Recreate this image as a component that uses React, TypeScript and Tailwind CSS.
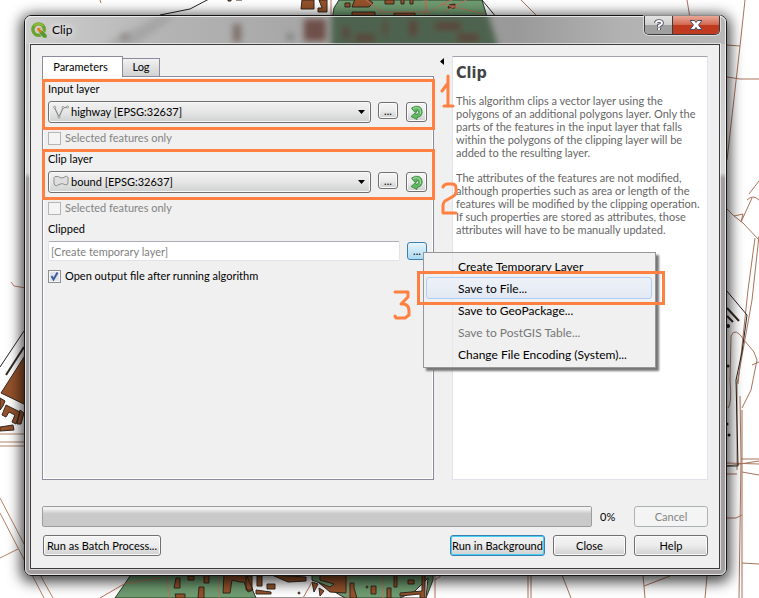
import type { ReactNode } from "react";

const DIALOG_FONT = "font-['Lato','Noto_Sans',sans-serif]";

const BUTTON =
  "rounded-[3px] border border-[#707070] bg-linear-to-b from-[#f4f4f4] from-0% via-[#ececec] via-50% to-[#cfcfcf] shadow-[inset_0_0_0_1px_#fbfbfb] text-black";

function MapBackdrop() {
  return (
    <svg
      className="absolute inset-0 h-full w-full"
      viewBox="0 0 759 598"
      preserveAspectRatio="none"
      fill="none"
      aria-hidden="true"
    >
      <rect width="759" height="598" fill="#fff" />
      {/* park at the top */}
      <path d="M339 0L334 8L332 20H488L482 0Z" fill="#6f9c71" stroke="#2b3d2b" />
      <path d="M482 0L497 18M209 -1L190 9L160 15" stroke="#222" />
      <g fill="#95522b" stroke="#35281f" strokeWidth="1">
        <path d="M302 0H314V9H301ZM319 0H327V12H318V8H322ZM345 3H350V7H345ZM355 -1H368L373 3L369 7H352ZM352 12H375V16H352ZM385 0H394V4H385ZM401 -1H404V4H401ZM410 -1H413V4H410ZM394 13H415V17H394ZM449 5L455 4V8H448Z" />
        <path d="M228 -1H231V1H228ZM236 -1H242V0H236Z" />
      </g>
      <path
        d="M331 0V18M366 0L382 12H428L424 0M382 10L378 18M428 14L442 4L452 0M427 0L425 16M444 12L470 -2M442 4L484 14M100 0L101 3"
        stroke="#b9735c"
      />
      {/* park at the bottom */}
      <path d="M134 570L122 588L115 598H426L433 580V570Z" fill="#6f9c71" stroke="#2b3d2b" />
      <path
        d="M253 570L250 584L256 598H345L318 582L308 570ZM428 578L415 591L400 598H426Z"
        fill="#fff"
        stroke="#35281f"
      />
      <g fill="#95522b" stroke="#35281f" strokeWidth="1">
        <path d="M176 578H180V588H174ZM188 576H194V580H188ZM204 575H209V583H204ZM199 587H204V598H198ZM175 594H185V598H176ZM224 574H246L253 590L248 592L244 582H240L232 580L230 593H223ZM246 576H252V590H246ZM257 576H262V586H257ZM267 584H275V589H267ZM272 575L306 577V581L288 582ZM256 590L271 592V594L256 594ZM312 582L318 584L314 592ZM319 588L324 591L320 596ZM318 574L346 574V593L330 592L318 582ZM350 583H354V588L357 598H350ZM371 586H376V594H371ZM387 588H391V598H387ZM394 574H397V587H394ZM408 580H414V584H408ZM422 573H425V598H420V594L400 596V593L422 591Z" />
        <path d="M312 572V580L330 587L334 584L320 580V572" fill="#6f9c71" />
        <circle cx="299" cy="593" r="1" />
        <circle cx="367" cy="587" r="1" />
      </g>
      <path
        d="M100 598L124 584L160 578M166 576L170 598M219 576V598M303 598L312 582M348 576V598M383 576V598M435 570V598M435 580L442 575"
        stroke="#b9735c"
      />
      {/* western quarter */}
      <path d="M24 331L0 367" stroke="#222" />
      <path d="M24 347L6 375" stroke="#35281f" strokeWidth="2" />
      <g fill="#95522b" stroke="#35281f" strokeWidth="1">
        <path d="M26 354L1 393L26 405ZM0 398L5 401L3 406L0 410ZM6 405L20 412L16 424L12 422L15 415L9 412L6 417L2 415ZM20 410L24 413L21 424L17 424ZM0 427L13 425L14 430L0 431Z" />
      </g>
      <path d="M0 434H26M0 442H26M0 446H26M11 282L14 286L26 288" stroke="#b58268" />
      <path d="M0 498L44 582L53 598M0 513L44 598M0 558L18 549" stroke="#b58268" />
      {/* eastern roads */}
      <g stroke="#a9745c">
        <path d="M521 0L537 16M687 0L690 18M745 0L740 46L727 160M727 45L740 46M727 77L740 79H759M759 181L749 194M747 200Q753 194 759 200" />
        <path d="M726 208L734 216L743 223L759 240M734 216L743 214L741 222L752 198M759 236L752 300L737 384V470M755 238L748 290L738 384M740 396L741 460L739 598M742 410V598" />
        <path d="M728 408Q732 404 730 380L731 336Q735 326 744 340L754 352L757 360L751 390L742 408M752 365L759 362M727 466L759 461M727 463L759 464M741 459H759M742 472L759 475M727 474H737M727 518H736L742 515M742 563L759 564M528 575V598M531 575V598M562 575L571 598M643 575L645 598M644 586L670 576M707 576L705 598" />
      </g>
      <path d="M726 290L747 315L742 352L736 380L738 466H726" stroke="#222" />
      <path d="M727 308L739 321M727 316L733 322" stroke="#35281f" strokeWidth="2" />
      <g fill="#222">
        <circle cx="728" cy="326" r="2" />
        <circle cx="728" cy="366" r="1.500" />
        <circle cx="727" cy="424" r="1.500" />
        <circle cx="729" cy="435" r="1.500" />
      </g>
    </svg>
  );
}

function GlassReflection() {
  return (
    <svg
      className="pointer-events-none absolute inset-x-0 top-0 h-[28px] w-full"
      viewBox="0 0 701 28"
      preserveAspectRatio="none"
      aria-hidden="true"
    >
      <defs>
        <filter id="glass" x="-20%" y="-60%" width="140%" height="220%">
          <feGaussianBlur stdDeviation="3" />
        </filter>
        <linearGradient id="bar">
          <stop offset="0" stopColor="#cfcfcf" />
          <stop offset="0.2" stopColor="#b4b4b4" />
          <stop offset="0.4" stopColor="#a6a6a6" />
          <stop offset="0.7" stopColor="#999" />
          <stop offset="0.85" stopColor="#b2b2b2" />
          <stop offset="1" stopColor="#b8b8b8" />
        </linearGradient>
      </defs>
      <rect width="701" height="28" fill="url(#bar)" />
      <path d="M80 28L135 0H150L112 28Z" fill="#999" filter="url(#glass)" opacity=".6" />
      <g filter="url(#glass)">
        <path d="M306 -6H462L474 34H306Z" fill="#4d6350" />
        <rect x="279" y="3" width="22" height="22" fill="#6e5048" />
        <rect x="208" y="8" width="8" height="18" fill="#7c6d68" />
        <rect x="262" y="18" width="6" height="6" fill="#777" />
        <rect x="96" y="18" width="8" height="6" fill="#8a8583" />
        <path
          d="M330 18H350V26H330ZM318 10H324V24H318ZM358 4H362V20H358ZM384 4H392V20H384ZM410 6H436V14H410ZM432 18H454V26H432Z"
          fill="#5c4338"
        />
      </g>
    </svg>
  );
}

function AppLogo() {
  return (
    <svg className="h-4 w-4" viewBox="0 0 16 16" aria-hidden="true">
      <circle cx="7.6" cy="7.6" r="5.7" fill="none" stroke="#6aa32d" strokeWidth="3.4" />
      <path d="M3 4A5.7 5.7 0 0 1 12 4" fill="none" stroke="#93b93a" strokeWidth="2" />
      <path d="M8 8L11 8L16 13V16H12.5L8 11Z" fill="#589632" stroke="#d5e2c5" strokeWidth=".5" />
      <path d="M6 6H10L9 8L11 10L10 11L8 9L7 10Z" fill="#ee7913" />
    </svg>
  );
}

function LineLayerIcon() {
  return (
    <svg className="h-4 w-4" viewBox="0 0 16 16" fill="none" stroke="#8c8c8c" aria-hidden="true">
      <path d="M1.5 3.5L6 13L10 4L14.5 3" strokeWidth="1.2" />
      <g fill="#f2f2f2" strokeWidth=".8">
        <circle cx="1.7" cy="3.3" r="1.1" />
        <circle cx="6" cy="13" r="1.1" />
        <circle cx="10" cy="3.5" r="1.1" />
        <circle cx="14.5" cy="3" r="1.1" />
      </g>
    </svg>
  );
}

function PolygonLayerIcon() {
  return (
    <svg className="h-4 w-4" viewBox="0 0 16 16" fill="#dedede" stroke="#8c8c8c" aria-hidden="true">
      <path d="M2 2.500Q6 2 8 4Q11 4 13.500 2Q16 3 15 7.500Q15.500 11 13 11Q9 8.500 6 10.500Q3 13 1.500 11Q.5 8 1 5.500Q.5 3 2 2.500Z" />
    </svg>
  );
}

function IterateIcon() {
  return (
    <svg className="h-[15px] w-[15px]" viewBox="0 0 15 15" aria-hidden="true">
      <path
        d="M2.500 3Q6.500 .3 10 1.500Q13.500 3 13.300 7.500Q12.500 12 8 12.700V14.500L2 11.500L6.500 7.500L7 9.500Q9.800 9 9.800 7.300Q9.500 5.500 7.700 5.500L7.500 7.300L5 6.500Z"
        fill="#62b862"
        stroke="#31833a"
        strokeWidth=".8"
      />
      <path d="M4 3.500Q8 1.500 10.500 3.500Q12.500 6 11.300 9" fill="none" stroke="#a8dca4" />
    </svg>
  );
}

function Digit({ path, box, className }: { path: string; box: string; className: string }) {
  return (
    <svg
      className={`absolute ${className}`}
      viewBox={box}
      fill="none"
      stroke="#ff8040"
      strokeWidth="3"
      strokeLinecap="round"
      strokeLinejoin="round"
      aria-hidden="true"
    >
      <path d={path} />
    </svg>
  );
}

function LayerPicker({
  id,
  label,
  value,
  icon,
  digit,
}: {
  id: string;
  label: string;
  value: string;
  icon: ReactNode;
  digit: ReactNode;
}) {
  return (
    <>
      <div className="relative">
        <label htmlFor={id} className="block h-4 leading-4">
          {label}
        </label>
        <div className="mt-1 flex items-start">
          <div className="relative min-w-0 flex-1">
            <span className="pointer-events-none absolute top-[3px] left-[5px]">{icon}</span>
            <select
              id={id}
              className="block h-[22px] w-full appearance-none rounded-[3px] border border-[#707070] bg-linear-to-b from-[#f2f2f2] from-0% via-[#e6e6e6] via-50% to-[#ced2d0] pt-px pl-[22px] text-[11px] text-black shadow-[inset_0_0_0_1px_#f8f8f8]"
            >
              <option>{value}</option>
            </select>
            <svg className="pointer-events-none absolute top-[9px] right-[6px] h-1 w-[7px]" viewBox="0 0 7 4" aria-hidden="true">
              <path d="M0 0H7L3.500 4Z" />
            </svg>
          </div>
          <button type="button" className={`${BUTTON} mt-px ml-[7px] h-[17px] w-5 leading-3`}>
            ...
          </button>
          <button
            type="button"
            aria-label="Iterate over this layer"
            className={`${BUTTON} mt-px ml-2 flex h-5 w-[21px] items-center justify-center`}
          >
            <IterateIcon />
          </button>
        </div>
        <div className="pointer-events-none absolute -top-[2px] -right-2 -bottom-[7px] -left-[6px] border-3 border-[#ff8040]">
          {digit}
        </div>
      </div>
      <label className="mt-2 mb-[6px] flex h-[14px] items-center text-[#838383]">
        <input
          type="checkbox"
          disabled
          className="mr-1 h-[13px] w-[13px] appearance-none border border-[#b5b5b5] bg-[#f4f4f4]"
        />
        Selected features only
      </label>
    </>
  );
}

function OutputMenu() {
  const item = "relative flex h-[22px] w-full items-center pt-[2px] pl-[34px] text-left whitespace-nowrap";
  return (
    <div
      role="menu"
      className="absolute top-[10px] left-4 w-[233px] border border-[#979797] bg-[#f0f0f0] bg-linear-to-r from-transparent from-[28px] via-[#e0e0e0] via-[28px] to-transparent to-[29px] py-[2px] text-[12px] text-black shadow-[3px_3px_2px_#777]"
    >
      <button type="button" role="menuitem" className={item}>
        Create Temporary Layer
      </button>
      <div className="relative">
        <div className="absolute inset-y-0 right-[3px] left-[2px] rounded-[3px] border border-[#aecff7] bg-linear-to-b from-[#eef1f7] to-[#e3e9f4]" />
        <button type="button" role="menuitem" className={item}>
          Save to File...
        </button>
        <div className="pointer-events-none absolute -top-[6px] -right-[10px] -bottom-[6px] -left-[7px] border-3 border-[#ff8040]">
          <Digit
            className="top-[15px] right-full mr-2 h-8 w-5"
            box="392 289 20 32"
            path="M395 292H408V297L401 304H404Q409 305 409 311V315L405 318H396L395 316"
          />
        </div>
      </div>
      <button type="button" role="menuitem" className={item}>
        Save to GeoPackage...
      </button>
      <button type="button" role="menuitem" disabled className={`${item} text-[#777]`}>
        Save to PostGIS Table...
      </button>
      <button type="button" role="menuitem" className={item}>
        Change File Encoding (System)...
      </button>
    </div>
  );
}

function ParametersPane() {
  return (
    <section className="relative z-10 flex flex-col">
      <div role="tablist" className="relative z-10 -mb-px flex items-end">
        <button
          type="button"
          role="tab"
          aria-selected="true"
          className="h-[21px] w-[81px] border border-b-0 border-[#8b8b9b] bg-white pr-1"
        >
          Parameters
        </button>
        <button
          type="button"
          role="tab"
          aria-selected="false"
          className="-ml-px h-[19px] w-[38px] border border-[#8b8b9b] bg-linear-to-b from-[#f2f2f2] to-[#d2d2d2]"
        >
          Log
        </button>
      </div>
      <div className="flex-1 border border-[#8b8b9b] pt-1 pr-[6px] pb-2 pl-[5px] shadow-[inset_0_0_0_1px_#fff]">
        <LayerPicker
          id="input-layer"
          label="Input layer"
          value="highway [EPSG:32637]"
          icon={<LineLayerIcon />}
          digit={
            <Digit
              className="-top-2 left-full ml-2 h-[34px] w-4"
              box="440 74 16 34"
              path="M448 76V105M442 91L448 83M444 106H453"
            />
          }
        />
        <LayerPicker
          id="clip-layer"
          label="Clip layer"
          value="bound [EPSG:32637]"
          icon={<PolygonLayerIcon />}
          digit={
            <Digit
              className="top-[30px] left-full ml-2 h-[34px] w-5"
              box="440 182 20 34"
              path="M443 187Q444 184 448 184H452Q456 184 456 188V192Q456 195 452 197L445 201Q443 203 443 205V213H456"
            />
          }
        />
        <label htmlFor="clipped" className="block h-4 leading-4">
          Clipped
        </label>
        <div className="mt-1 flex items-start">
          <input
            id="clipped"
            type="text"
            placeholder="[Create temporary layer]"
            className="h-5 min-w-0 flex-1 rounded-[2px] border border-[#e2e3ea] border-t-[#abadb3] bg-white px-[2px] placeholder:text-[#808080]"
          />
          <div className="relative mt-px ml-[7px]">
            <button
              type="button"
              className="block h-[18px] w-5 rounded-[3px] border border-[#3c7fb1] bg-linear-to-b from-[#e8f5fc] to-[#a9d9f2] leading-3"
            >
              ...
            </button>
            <OutputMenu />
          </div>
        </div>
        <label className="mt-2 flex h-[14px] items-center">
          <span className="relative mr-1 h-[13px] w-[13px]">
            <input
              type="checkbox"
              defaultChecked
              className="block h-[13px] w-[13px] appearance-none border border-[#8e8f8f] bg-[#dfe4ea] shadow-[inset_0_0_0_1px_#f6f6f6]"
            />
            <svg className="pointer-events-none absolute inset-0" viewBox="0 0 13 13" fill="none" aria-hidden="true">
              <path d="M3.500 6L5.500 9.500L9.500 2.500" stroke="#3f5b9c" strokeWidth="2" />
            </svg>
          </span>
          Open output file after running algorithm
        </label>
      </div>
    </section>
  );
}

export default function App() {
  return (
    <main className={`relative flex min-h-screen flex-col overflow-hidden pt-[15px] pr-8 pb-[22px] pl-6 text-[11px] text-black ${DIALOG_FONT}`}>
      <MapBackdrop />
      <div
        role="dialog"
        aria-labelledby="dialog-title"
        className="relative flex flex-1 flex-col rounded-[7px] border border-[#161616] bg-linear-to-b from-[#c4c4c4] from-0% via-[#d6d6d6] via-28% to-[#a39fa1] to-29% pr-[6px] pb-[6px] pl-[5px] shadow-[0_3px_14px_3px_rgba(0,0,0,0.75)]"
      >
        <div className="absolute inset-0 overflow-hidden rounded-[6px]">
          <GlassReflection />
        </div>
        <div className="pointer-events-none absolute inset-0 rounded-[6px] border border-white/70" />
        <header className="relative flex h-7 items-center pl-px">
          <AppLogo />
          <h1 id="dialog-title" className="ml-[5px] flex-1 text-[12px] [text-shadow:0_0_6px_#fff,0_0_10px_#fff]">
            Clip
          </h1>
          <div className="flex h-[19px] self-start overflow-hidden rounded-b-[5px] border border-t-0 border-[#3c3c3c] shadow-[0_0_0_1px_rgba(255,255,255,0.5)]">
            <button
              type="button"
              aria-label="Help"
              className="flex w-[28px] items-center justify-center border-r border-[#3c3c3c] bg-linear-to-b from-[#e4e4e4] from-0% via-[#cdcdcd] via-50% to-[#a0a0a0] to-51%"
            >
              <svg className="h-3 w-3" viewBox="0 0 12 12" fill="none" aria-hidden="true">
                <path d="M3 4Q3 2 6 2Q9 2 9 4Q9 5.500 6 6.500V8M6 9V11" stroke="#4a4a60" strokeWidth="3.600" />
                <path d="M3 4Q3 2 6 2Q9 2 9 4Q9 5.500 6 6.500V8M6 9V11" stroke="#fff" strokeWidth="1.800" />
              </svg>
            </button>
            <button
              type="button"
              aria-label="Close window"
              className="flex w-[46px] items-center justify-center bg-linear-to-b from-[#e8a898] from-0% via-[#d0664e] via-50% to-[#c03a20] to-51%"
            >
              <svg className="h-[10px] w-3" viewBox="0 0 12 10" fill="none" aria-hidden="true">
                <path d="M0 .5H4.500L6 2.500L7.500 .5H12L8.500 5L12 9.500H7.500L6 7.500L4.500 9.500H0L3.500 5Z" fill="#fff" stroke="#4a4a60" />
              </svg>
            </button>
          </div>
        </header>

        <div className="relative flex flex-1 flex-col border border-[#3c3c3c] bg-[#f0f0f0] px-[11px] pt-[11px] pb-3 shadow-[0_0_0_1px_rgba(255,255,255,0.6)]">
          <div className="grid flex-1 grid-cols-[392fr_18px_256fr]">
            <ParametersPane />
            <button type="button" aria-label="Collapse description" className="flex items-start pt-[2px] pl-[6px]">
              <svg className="h-[7px] w-1" viewBox="0 0 4 7" aria-hidden="true">
                <path d="M4 0V7L0 3.500Z" />
              </svg>
            </button>
            <article className="border border-[#e0e3ec] border-t-[#a5a5b0] bg-white pt-[6px] pr-1 pl-[3px] text-[#666]">
              <h2 className="font-['DejaVu_Sans_Condensed','Noto_Sans',sans-serif] text-[16px] leading-5 font-bold text-[#444]">
                Clip
              </h2>
              <p className="mt-[11px] leading-[13px]">
                This algorithm clips a vector layer using the polygons of an additional polygons layer. Only the parts
                of the features in the input layer that falls within the polygons of the clipping layer will be added
                to the resulting layer.
              </p>
              <p className="mt-3 leading-[13px]">
                The attributes of the features are not modified, although properties such as area or length of the
                features will be modified by the clipping operation. If such properties are stored as attributes, those
                attributes will have to be manually updated.
              </p>
            </article>
          </div>

          <div className="mt-[26px] flex items-center">
            <progress
              aria-label="Progress"
              value={0}
              max={100}
              className="h-[21px] min-w-0 flex-1 appearance-none rounded-[2px] border border-[#9c9c9c] bg-transparent [&::-webkit-progress-bar]:bg-linear-to-b [&::-webkit-progress-bar]:from-[#f2f2f2] [&::-webkit-progress-bar]:from-10% [&::-webkit-progress-bar]:via-[#cacaca] [&::-webkit-progress-bar]:via-35% [&::-webkit-progress-bar]:to-[#c9c9c9] [&::-webkit-progress-value]:bg-[#06b025]"
            />
            <span className="w-[42px] pt-[2px] pl-2">0%</span>
            <button
              type="button"
              disabled
              className="h-[21px] w-[74px] rounded-[3px] border border-[#adb2b5] bg-[#f4f4f4] pt-px text-[#838383]"
            >
              Cancel
            </button>
          </div>
          <div className="mt-2 flex gap-2">
            <button type="button" className={`${BUTTON} mr-auto ml-px h-[21px] w-[118px] pt-px whitespace-nowrap`}>
              Run as Batch Process...
            </button>
            <button
              type="button"
              className="h-[21px] w-[95px] rounded-[3px] border border-[#3c7fb1] bg-linear-to-b from-[#f2f2f2] from-0% via-[#ebebeb] via-50% to-[#cfcfcf] pt-px whitespace-nowrap shadow-[inset_0_0_0_1px_#46d0f5]"
            >
              Run in Background
            </button>
            <button type="button" className={`${BUTTON} h-[21px] w-[73px] pt-px`}>
              Close
            </button>
            <button type="button" className={`${BUTTON} h-[21px] w-[74px] pt-px`}>
              Help
            </button>
          </div>
        </div>
      </div>
    </main>
  );
}
